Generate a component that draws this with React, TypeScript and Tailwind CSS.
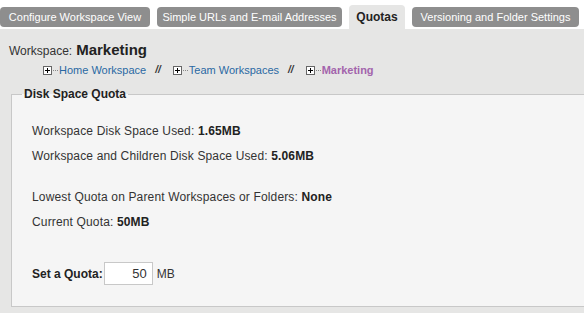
import React, { useState } from "react";

const tabs = [
  { label: "Configure Workspace View", active: false, w: "w-[150px]" },
  { label: "Simple URLs and E-mail Addresses", active: false, w: "w-[185px]" },
  { label: "Quotas", active: true, w: "w-[56px]" },
  { label: "Versioning and Folder Settings", active: false, w: "w-[167px]" },
];

const crumbs = [
  { label: "Home Workspace", current: false },
  { label: "Team Workspaces", current: false },
  { label: "Marketing", current: true },
];

const PlusBox = () => (
  <span className="inline-flex items-center shrink-0">
    <svg width="9" height="9" viewBox="0 0 9 9" className="block">
      <rect x="0.5" y="0.5" width="8" height="8" fill="#fff" stroke="#666" />
      <path d="M2 4.5h5M4.5 2v5" stroke="#000" />
    </svg>
    <span className="w-[5px] border-t border-dotted border-[#888] ml-[1px] mr-[1px]" />
  </span>
);

const App = () => {
  const [quota, setQuota] = useState("50");

  return (
    <div className="w-[584px] h-[313px] bg-white overflow-hidden font-['Liberation_Sans',Arial,sans-serif] text-[12px] text-[#333]">
      <div className="flex items-start gap-[7px] h-[29px] whitespace-nowrap">
        {tabs.map((t) =>
          t.active ? (
            <div
              key={t.label}
              className={`${t.w} shrink-0 h-[24px] mt-[5px] flex items-center justify-center rounded-t-[4px] bg-[#e6e6e5] font-bold text-[12px] text-[#222] leading-none`}
            >
              {t.label}
            </div>
          ) : (
            <div
              key={t.label}
              className={`${t.w} shrink-0 h-[20px] mt-[7px] flex items-center justify-center rounded-[4px] bg-[#8e8e8e] text-white text-[11px] leading-none`}
            >
              {t.label}
            </div>
          )
        )}
      </div>
      <div className="bg-[#e6e6e5] h-[284px] pl-[11px] pt-[12px]">
        <div className="flex items-baseline gap-[4px] -ml-[2px] h-[18px] leading-[18px]">
          <span className="text-[12px]">Workspace:</span>
          <span className="text-[15px] font-bold text-[#222]">Marketing</span>
        </div>
        <div className="flex items-center mt-[4px] pl-[32px] h-[14px] text-[11px] leading-[14px] whitespace-nowrap">
          {crumbs.map((c, i) => (
            <React.Fragment key={c.label}>
              <PlusBox />
              <a className={c.current ? "font-bold text-[#a364ac]" : "text-[#2a69a3]"}>
                {c.label}
              </a>
              {i < crumbs.length - 1 && (
                <span className="italic font-bold text-[#333] text-[10px] pl-[9px] pr-[12px]">//</span>
              )}
            </React.Fragment>
          ))}
        </div>
        <fieldset className="mt-[10px] w-[600px] h-[220px] border border-[#c8c8c8] bg-[#f5f5f5] pl-[20px] tracking-[0.15px]">
          <legend className="-ml-[10px] px-[2px] text-[12px] leading-[14px] font-bold text-[#222] tracking-normal">
            Disk Space Quota
          </legend>
          <div className="flex flex-col pt-[18px]">
            <p className="h-[25px] leading-[25px]">
              Workspace Disk Space Used: <b className="text-[#222]">1.65MB</b>
            </p>
            <p className="h-[25px] leading-[25px]">
              Workspace and Children Disk Space Used: <b className="text-[#222]">5.06MB</b>
            </p>
            <p className="h-[25px] leading-[25px] mt-[16px]">
              Lowest Quota on Parent Workspaces or Folders: <b className="text-[#222]">None</b>
            </p>
            <p className="h-[25px] leading-[25px]">
              Current Quota: <b className="text-[#222]">50MB</b>
            </p>
            <div className="flex items-center mt-[27px] h-[23px] tracking-normal">
              <b className="text-[#222] mr-[1px]">Set a Quota:</b>
              <input
                value={quota}
                onChange={(e) => setQuota(e.target.value)}
                className="w-[49px] h-[23px] border border-[#c8c8c8] bg-white text-right pr-[5px] text-[13px] text-[#333] outline-none"
              />
              <span className="ml-[4px]">MB</span>
            </div>
          </div>
        </fieldset>
      </div>
    </div>
  );
};

export default App;
